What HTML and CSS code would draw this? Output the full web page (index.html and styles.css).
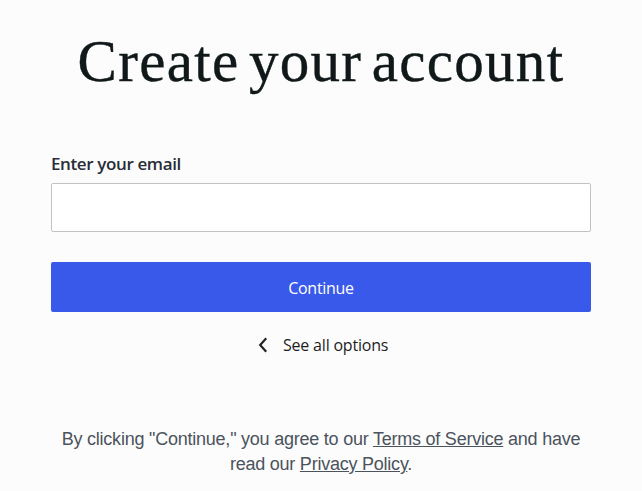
FILE: index.html
```html
<!DOCTYPE html>
<html lang="en">
<head>
    <meta charset="UTF-8">
    <meta name="viewport" content="width=device-width, initial-scale=1.0">
    <title>Create your account</title>
    <link rel="stylesheet" href="styles.css">
</head>
<body>
    <main class="signup">
        <h1>Create your account</h1>
        <form>
            <label for="email">Enter your email</label>
            <input type="email" id="email" name="email">
            <button type="submit">Continue</button>
        </form>
        <a class="options" href="#">
            <svg width="10" height="16" viewBox="0 0 10 16" fill="none" stroke="#222426" stroke-width="2.2">
                <path d="M8.2 1.3L2.2 8l6 6.7"/>
            </svg>
            <span>See all options</span>
        </a>
        <p class="terms">
            By clicking "Continue," you agree to our <a href="#">Terms of Service</a> and have<br>
            read our <a href="#">Privacy Policy</a>.
        </p>
    </main>
</body>
</html>
```

FILE: styles.css
```css
* {
    box-sizing: border-box;
}
body {
    margin: 0;
    background-color: #fcfcfc;
    color: #1e1e1e;
    font-family: "Open Sans", sans-serif;
}
.signup {
    width: 540px;
    margin: 0 auto;
    padding-top: 26px;
}
h1 {
    margin: 0;
    height: 126px;
    color: #10181a;
    font-family: "Liberation Serif", serif;
    font-size: 59px;
    font-weight: 400;
    line-height: 70px;
    letter-spacing: 1.3px;
    word-spacing: -6.5px;
    text-align: center;
    white-space: nowrap;
    -webkit-text-stroke: 0.4px #10181a;
}
form {
    display: flex;
    flex-direction: column;
}
label {
    height: 31px;
    color: #282d37;
    font-size: 17px;
    font-weight: 600;
    line-height: 23px;
    letter-spacing: -0.38px;
}
input {
    height: 49px;
    border: 1px solid #c2c2c2;
    border-radius: 2px;
    background-color: #fff;
}
button {
    height: 50px;
    margin-top: 30px;
    padding: 2px 0 0;
    border: none;
    border-radius: 2px;
    background-color: #3859e9;
    color: #fff;
    font-family: "Open Sans", sans-serif;
    font-size: 16px;
    letter-spacing: -0.3px;
}
.options {
    display: flex;
    align-items: center;
    height: 24px;
    margin: 21px 0 0 207px;
    gap: 15px;
    color: #1e1e1e;
    font-size: 16px;
    letter-spacing: -0.2px;
    text-decoration: none;
    white-space: nowrap;
}
.terms {
    margin: 70px 0 0;
    color: #4b535d;
    font-family: "Liberation Sans", sans-serif;
    font-size: 18px;
    line-height: 25px;
    letter-spacing: -0.23px;
    text-align: center;
    white-space: nowrap;
}
.terms a {
    color: inherit;
}
```
